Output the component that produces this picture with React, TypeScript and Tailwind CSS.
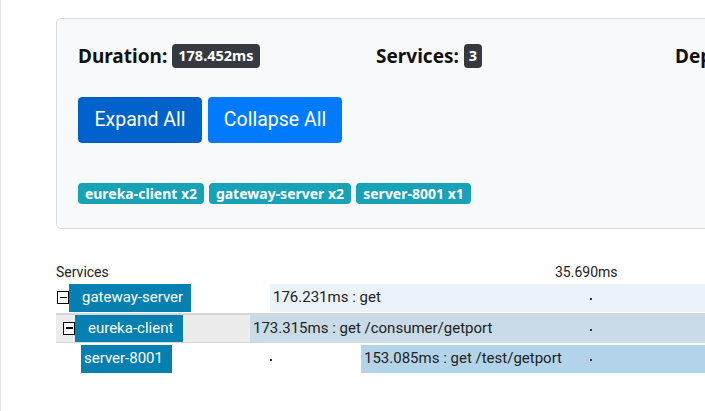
import React from "react";

type SpanRow = {
  id: string;
  name: string;
  indent: number;
  toggle: boolean;
  labelBox: string;
  barLeft: number;
  barColor: string;
  text: string;
  startDot: boolean;
};

const spans: SpanRow[] = [
  {
    id: "a",
    name: "gateway-server",
    indent: 1,
    toggle: true,
    labelBox: "w-[122px] pl-[13px]",
    barLeft: 214,
    barColor: "bg-[#ebf3fa]",
    text: "176.231ms : get",
    startDot: true,
  },
  {
    id: "b",
    name: "eureka-client",
    indent: 7,
    toggle: true,
    labelBox: "w-[108px] pl-[13px]",
    barLeft: 194,
    barColor: "bg-[#c9dbe6]",
    text: "173.315ms : get /consumer/getport",
    startDot: false,
  },
  {
    id: "c",
    name: "server-8001",
    indent: 25,
    toggle: false,
    labelBox: "w-[91px] pl-[3px]",
    barLeft: 305,
    barColor: "bg-[#b3d4e8]",
    text: "153.085ms : get /test/getport",
    startDot: true,
  },
];

const MinusBox = () => (
  <span className="flex h-[13px] w-[12px] items-center justify-center border border-black bg-white">
    <span className="h-[1.5px] w-[7px] bg-black"></span>
  </span>
);

const SpanLine = ({ row }: { row: SpanRow }) => {
  return (
    <div className="relative h-full w-full">
      <div
        className="absolute top-0 bottom-0 flex items-center"
        style={{ left: row.indent }}
      >
        {row.toggle && <MinusBox />}
        <span
          className={`flex h-full items-center bg-[#0580b0] text-[15px] text-white ${row.labelBox}`}
        >
          {row.name}
        </span>
      </div>
      {row.startDot && (
        <span className="absolute left-[214px] top-[14px] h-[2px] w-[2px] bg-[#333]"></span>
      )}
      <div
        className={`absolute top-0 bottom-0 right-0 flex items-center pl-[3px] text-[15px] text-[#222] ${row.barColor}`}
        style={{ left: row.barLeft }}
      >
        {row.text}
      </div>
      <span className="absolute left-[534px] top-[14px] h-[2px] w-[2px] bg-[#333]"></span>
    </div>
  );
};

export default function App() {
  return (
    <div
      className="h-[411px] w-[705px] overflow-hidden border-l border-[#e2e2e2] bg-white font-['Roboto','Noto_Sans',sans-serif]"
    >
      <div className="w-[1100px] pl-[55px] pt-[18px]">
        <div className="rounded-[5px] border border-[#dcdcdc] bg-[#f8f9fa] pl-[21px] pt-[23px] pb-[24px]">
          <div className="grid grid-cols-[298px_299px_298px] font-['Noto_Sans',sans-serif] text-[19px] font-bold text-[#111]">
            <div className="flex items-center gap-[5px]">
              <span>Duration:</span>
              <span className="rounded-[4px] bg-[#343a40] px-[6px] py-[1px] text-[14.5px] text-white">
                178.452ms
              </span>
            </div>
            <div className="flex items-center gap-[5px]">
              <span>Services:</span>
              <span className="rounded-[4px] bg-[#343a40] px-[5px] py-[1px] text-[14.5px] text-white">
                3
              </span>
            </div>
            <div className="flex items-center gap-[5px]">
              <span>Depth:</span>
            </div>
          </div>
          <div className="mt-[26px] flex gap-[6px]">
            <button className="h-[46px] w-[124px] rounded-[4px] border border-[#005cbf] bg-[#0062cc] text-[19.5px] text-white">
              Expand All
            </button>
            <button className="h-[46px] w-[134px] rounded-[4px] bg-[#007bff] text-[19.5px] text-white">
              Collapse All
            </button>
          </div>
          <div className="mt-[40px] flex gap-[5px] font-['Noto_Sans',sans-serif] text-[14px] font-bold text-white">
            <span className="flex h-[21px] w-[126px] items-center justify-center rounded-[4px] bg-[#17a2b8]">
              eureka-client x2
            </span>
            <span className="flex h-[21px] w-[142px] items-center justify-center rounded-[4px] bg-[#17a2b8]">
              gateway-server x2
            </span>
            <span className="flex h-[21px] w-[115px] items-center justify-center rounded-[4px] bg-[#17a2b8]">
              server-8001 x1
            </span>
          </div>
        </div>

        <div className="mt-[34px] flex h-[20px] items-center text-[14px] text-[#222]">
          <span className="w-[499px]">Services</span>
          <span>35.690ms</span>
        </div>
        <div className="mt-[1px] h-[28px]">
          <SpanLine row={spans[0]} />
        </div>
        <div className="mt-[1px] h-[30px] border-t-2 border-b border-[#d6d6d6] bg-[linear-gradient(to_right,#ececec_194px,transparent_194px)]">
          <SpanLine row={spans[1]} />
        </div>
        <div className="mt-[2px] h-[28px]">
          <SpanLine row={spans[2]} />
        </div>
      </div>
    </div>
  );
}
